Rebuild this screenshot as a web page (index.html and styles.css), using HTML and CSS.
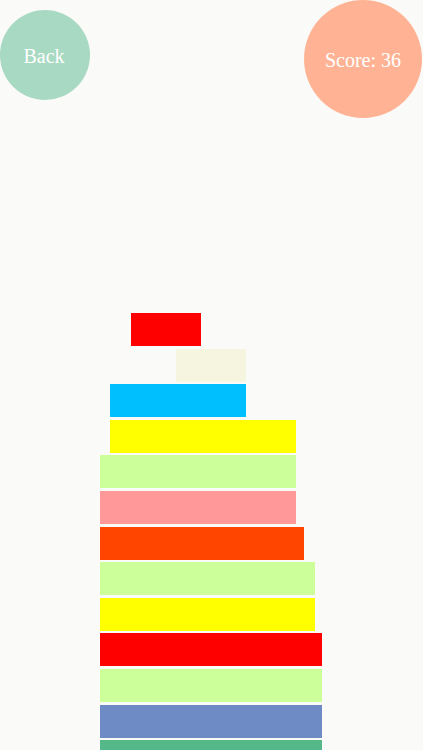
FILE: index.html
```html
<!DOCTYPE html>
<html lang="en">
<head>
    <meta charset="UTF-8">
    <meta name="viewport" content="width=device-width, initial-scale=1.0">
    <title>Stack Tower</title>
    <link rel="stylesheet" href="styles.css">
</head>
<body>
    <div class="header">
        <div class="circle back-button">Back</div>
        <div class="circle score">Score: 36</div>
    </div>

    <div class="tower">
        <div class="block red" style="margin-left: 131px; width: 70px;"></div>
        <div class="block beige" style="margin-left: 176px; width: 70px;"></div>
        <div class="block sky" style="margin-left: 110px; width: 136px;"></div>
        <div class="block yellow" style="margin-left: 110px; width: 186px;"></div>
        <div class="block lime" style="margin-left: 100px; width: 196px;"></div>
        <div class="block pink" style="margin-left: 100px; width: 196px;"></div>
        <div class="block orange" style="margin-left: 100px; width: 204px;"></div>
        <div class="block lime" style="margin-left: 100px; width: 215px;"></div>
        <div class="block yellow" style="margin-left: 100px; width: 215px;"></div>
        <div class="block red" style="margin-left: 100px; width: 222px;"></div>
        <div class="block lime" style="margin-left: 100px; width: 222px;"></div>
        <div class="block steel" style="margin-left: 100px; width: 222px;"></div>
        <div class="block teal" style="margin-left: 100px; width: 222px;"></div>
    </div>
</body>
</html>
```

FILE: styles.css
```css
body {
    font-family: "Liberation Serif", serif;
    background-color: #fafaf8;
    margin: 0;
    padding: 0;
    height: 750px;
    overflow: hidden;
}
.header {
    display: flex;
    justify-content: space-between;
    align-items: flex-start;
}
.circle {
    display: flex;
    justify-content: center;
    align-items: center;
    box-sizing: border-box;
    padding-top: 3px;
    border-radius: 50%;
    color: white;
    font-size: 20px;
}
.back-button {
    width: 90px;
    height: 90px;
    margin-top: 10px;
    padding-right: 2px;
    background-color: #a8d9c2;
    cursor: pointer;
}
.score {
    width: 118px;
    height: 118px;
    margin-right: 1px;
    background-color: #ffb394;
}
.tower {
    display: flex;
    flex-direction: column;
    gap: 2.6px;
    margin-top: 195px;
}
.block {
    height: 33px;
    flex-shrink: 0;
}
.red { background-color: #ff0000; }
.beige { background-color: #f5f5e0; }
.sky { background-color: #00bfff; }
.yellow { background-color: #ffff00; }
.lime { background-color: #ccff99; }
.pink { background-color: #ff9999; }
.orange { background-color: #ff4500; }
.steel { background-color: #6f8bc6; }
.teal { background-color: #55b888; }
```
